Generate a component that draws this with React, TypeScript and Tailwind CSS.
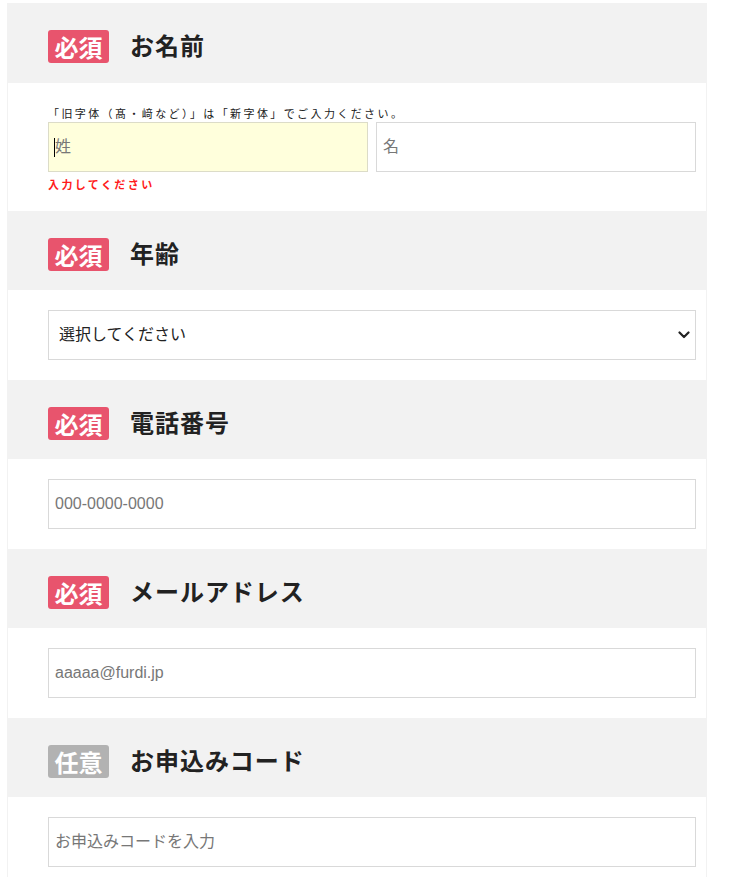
import React from "react";

const jp = { fontFamily: '"Noto Sans CJK JP", "Noto Sans", sans-serif' };
const inputFont = { fontFamily: '"Liberation Sans", "Noto Sans CJK JP", sans-serif' };

function Badge({ required }: { required: boolean }) {
  return (
    <span
      className={`flex h-[33px] w-[61px] items-center justify-center rounded-[3px] text-[24px] font-bold leading-none text-white ${
        required ? "bg-[#e8546d]" : "bg-[#b2b2b2]"
      }`}
      style={jp}
    >
      {required ? "必須" : "任意"}
    </span>
  );
}

function Header({ required, title, first }: { required: boolean; title: string; first?: boolean }) {
  return (
    <div
      className={`flex items-center gap-[21px] bg-[#f2f2f2] pl-[41px] pt-[27px] ${
        first ? "pb-[20px]" : "pb-[19px]"
      }`}
    >
      <Badge required={required} />
      <span
        className="mb-[4px] text-[24px] font-bold leading-none tracking-[0.04em] text-[#222]"
        style={jp}
      >
        {title}
      </span>
    </div>
  );
}

function TextInput({ placeholder }: { placeholder: string }) {
  return (
    <input
      type="text"
      placeholder={placeholder}
      className="h-[50px] w-full border border-[#d9d9d9] bg-white px-[6px] text-[16px] text-[#222] outline-none placeholder:text-[#777]"
      style={inputFont}
    />
  );
}

export default function App() {
  return (
    <div className="min-h-screen bg-white pl-[7px] pt-[3px]">
      <div className="w-[700px]">
        <Header required title="お名前" first />
        <div className="border-x border-[#f2f2f2] pb-[19px] pl-[40px] pr-[10px] pt-[22px]">
          <p className="mb-[1px] text-[11px] leading-[16px] tracking-[2.4px] text-[#222]" style={jp}>
            「旧字体（髙・﨑など）」は「新字体」でご入力ください。
          </p>
          <div className="grid grid-cols-2 gap-[8px]">
            <div className="relative">
              <input
                type="text"
                placeholder="姓"
                className="h-[50px] w-full border border-[#dcdcc8] bg-[#ffffdc] px-[6px] text-[16px] text-[#222] outline-none placeholder:text-[#777]"
                style={inputFont}
              />
              <span className="absolute left-[6px] top-[16px] h-[19px] w-[1px] bg-black" />
            </div>
            <TextInput placeholder="名" />
          </div>
          <p className="mt-[4px] text-[11px] font-bold leading-[16px] tracking-[2.4px] text-[#ff1a1a]" style={jp}>
            入力してください
          </p>
        </div>

        <Header required title="年齢" />
        <div className="border-x border-[#f2f2f2] py-[20px] pl-[40px] pr-[10px]">
          <div className="relative">
            <select
              className="h-[50px] w-full appearance-none border border-[#d9d9d9] bg-white pl-[10px] text-[16px] text-[#222] outline-none"
              style={inputFont}
              defaultValue=""
            >
              <option value="">選択してください</option>
            </select>
            <svg
              className="pointer-events-none absolute right-[6px] top-[21px]"
              width="12"
              height="8"
              viewBox="0 0 12 8"
              fill="none"
              stroke="#222"
              strokeWidth="2.2"
              strokeLinecap="round"
              strokeLinejoin="round"
            >
              <path d="M1.5 1.5L6 6l4.5-4.5" />
            </svg>
          </div>
        </div>

        <Header required title="電話番号" />
        <div className="border-x border-[#f2f2f2] py-[20px] pl-[40px] pr-[10px]">
          <TextInput placeholder="000-0000-0000" />
        </div>

        <Header required title="メールアドレス" />
        <div className="border-x border-[#f2f2f2] py-[20px] pl-[40px] pr-[10px]">
          <TextInput placeholder="aaaaa@furdi.jp" />
        </div>

        <Header required={false} title="お申込みコード" />
        <div className="border-x border-[#f2f2f2] py-[20px] pl-[40px] pr-[10px]">
          <TextInput placeholder="お申込みコードを入力" />
        </div>
      </div>
    </div>
  );
}
